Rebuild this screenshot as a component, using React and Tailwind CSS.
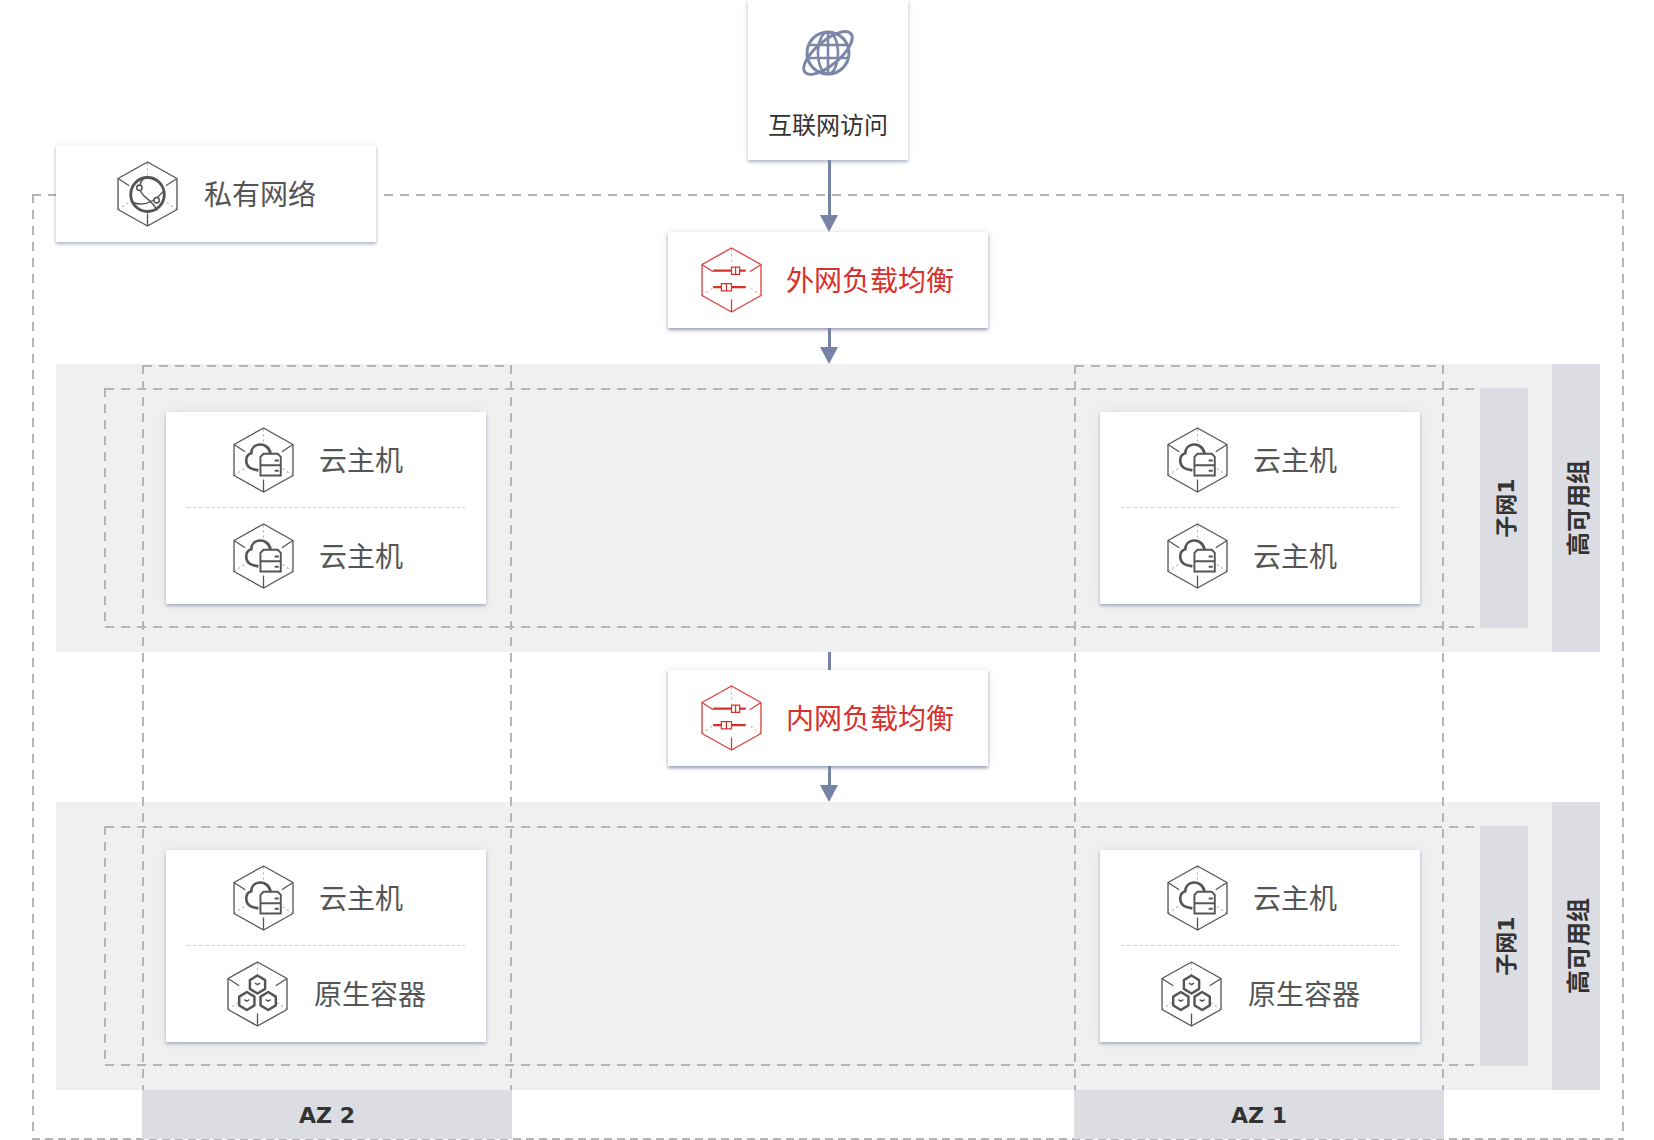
const ARROW = '#7783a6'

function HexIcon({ color = '#555', children }) {
  return (
    <svg width="61" height="66" viewBox="0 0 60 64" preserveAspectRatio="none" fill="none" className="shrink-0">
      <g stroke={color} strokeWidth="1.3" strokeLinejoin="round">
        <path d="M30 1 L59 17 V47 L30 63 L1 47 V17 Z" />
        <path d="M1 17 L12 24 M59 17 L48 24 M30 63 V51" />
      </g>
      <g stroke={color} strokeOpacity="0.5" strokeWidth="1" strokeDasharray="2 3">
        <path d="M30 2 V15 M1 47 L13 39 M59 47 L47 39" />
      </g>
      {children}
    </svg>
  )
}

function CloudIcon() {
  return (
    <HexIcon>
      <g stroke="#555" fill="none" strokeWidth="1.9">
        <path d="M37 26 C36 20 31 16.5 26 17 C21 17.5 18 21 18 25.5 C14.5 26.5 13 29.5 13 32.5 C13 37 16 40 20 41 L25 42" strokeWidth="2.6" />
        <path d="M27 47 V29 L30 26 H44 L47 29 V47 Z M27 37 H47" fill="#fff" />
        <path d="M41 32.5 H45 M41 42.5 H45" />
      </g>
    </HexIcon>
  )
}

function ContainerIcon() {
  return (
    <HexIcon>
      <g stroke="#555" fill="none" strokeWidth="2.4" strokeLinejoin="round">
        <path d="M30 14 L37.5 18.5 V27 L30 31.5 L22.5 27 V18.5 Z" />
        <path d="M19.5 30 L27 34.5 V43 L19.5 47.5 L12 43 V34.5 Z" />
        <path d="M40.5 30 L48 34.5 V43 L40.5 47.5 L33 43 V34.5 Z" />
        <path d="M27.5 21.5 L30 23 L32.5 21.5 M17 37.5 L19.5 39 L22 37.5 M38 37.5 L40.5 39 L43 37.5" strokeWidth="1.4" />
      </g>
    </HexIcon>
  )
}

function VpcIcon() {
  return (
    <HexIcon>
      <g stroke="#555" fill="none">
        <circle cx="30" cy="32.5" r="16.5" strokeWidth="2.8" fill="#fff" />
        <path d="M26 17 C20 24 22 30 28 35 C33 39 38 44 39 48" strokeWidth="1.4" />
        <path d="M15 40 C25 44 35 42 46 29" strokeWidth="1.4" />
        <circle cx="22" cy="26" r="2.6" strokeWidth="1.5" fill="#fff" />
        <circle cx="39" cy="38" r="2.6" strokeWidth="1.5" fill="#fff" />
      </g>
    </HexIcon>
  )
}

function BalancerIcon() {
  return (
    <HexIcon color="#d8403a">
      <g stroke="#d8302a" fill="none">
        <path d="M12 23 H30 M38 23 H44 M12 39 H20 M30 39 H44" strokeWidth="2.2" />
        <path d="M30 19.5 H38 V26.5 H30 Z M34 19.5 V26.5 M20 35.5 H30 V42.5 H20 Z M25 35.5 V42.5" strokeWidth="1.2" fill="#fff" />
      </g>
    </HexIcon>
  )
}

function GlobeIcon() {
  return (
    <svg width="52" height="52" viewBox="0 0 52 52" fill="none" stroke="#7b86a8" strokeWidth="3" className="shrink-0">
      <circle cx="26" cy="26" r="21" />
      <ellipse cx="26" cy="26" rx="10" ry="21" strokeWidth="2.6" />
      <path d="M26 5 V47 M6 18 H46 M5 31 H47" strokeWidth="2.6" />
      <ellipse cx="26" cy="26" rx="30" ry="12" transform="rotate(-40 26 26)" />
    </svg>
  )
}

function Arrow({ height }) {
  return (
    <div className="flex flex-col items-center shrink-0 translate-x-[1px]">
      <div className="w-[3px] bg-[#7783a6]" style={{ height }} />
      <svg width="18" height="17" viewBox="0 0 18 17" className="block">
        <path d="M0 0 H18 L9 17 Z" fill={ARROW} />
      </svg>
    </div>
  )
}

function LoadBalancer({ name }) {
  return (
    <div className="flex items-center shrink-0 w-[320px] h-[96px] pl-[33px] gap-[24px] bg-white shadow-[0_2px_3px_rgba(90,100,140,0.6),0_0_10px_rgba(0,0,0,0.08)]">
      <BalancerIcon />
      <span className="pb-[2px] text-[28px] leading-none text-[#d8302a]">{name}</span>
    </div>
  )
}

function HostCard({ bottom = 'host' }) {
  return (
    <div className="w-[320px] h-[192px] mt-[48px] shrink-0 bg-white shadow-[0_2px_3px_rgba(90,100,140,0.45),0_0_14px_rgba(0,0,0,0.05)]">
      <div className="flex items-center h-[95px] pl-[67px] gap-[25px]">
        <CloudIcon />
        <span className="pb-[2px] text-[28px] leading-none text-[#555]">云主机</span>
      </div>
      <div className="h-px mx-[21px] bg-[repeating-linear-gradient(90deg,#d4d4d4_0_4px,transparent_4px_6px)]" />
      {bottom === 'host' ? (
        <div className="flex items-center h-[96px] pl-[67px] gap-[25px]">
          <CloudIcon />
          <span className="pb-[2px] text-[28px] leading-none text-[#555]">云主机</span>
        </div>
      ) : (
        <div className="flex items-center h-[96px] pl-[61px] gap-[26px]">
          <ContainerIcon />
          <span className="pb-[2px] text-[28px] leading-none text-[#555]">原生容器</span>
        </div>
      )}
    </div>
  )
}

function Band({ bottom }) {
  return (
    <div className="flex items-start h-[288px] ml-[56px] w-[1544px] pl-[110px] bg-[#f0f0f1]">
      <HostCard bottom={bottom} />
      <div className="ml-[614px]">
        <HostCard bottom={bottom} />
      </div>
      <div className="flex items-center justify-center w-[48px] h-[240px] ml-[60px] mt-[24px] shrink-0 bg-[#dcdde3]">
        <span className="-rotate-90 translate-x-[3px] whitespace-nowrap text-[22px] font-bold leading-none text-[#333] font-[family-name:'DejaVu_Sans','Noto_Sans_CJK_SC',sans-serif]">子网1</span>
      </div>
      <div className="flex items-center justify-center w-[48px] h-[288px] ml-[24px] shrink-0 bg-[#dcdde3]">
        <span className="-rotate-90 translate-x-[1px] whitespace-nowrap text-[24px] font-bold leading-none text-[#333]">高可用组</span>
      </div>
    </div>
  )
}

const hDash = 'absolute h-[2px] bg-[repeating-linear-gradient(90deg,#b5b5b5_0_9px,transparent_9px_16px)]'
const vDash = 'absolute w-[2px] bg-[repeating-linear-gradient(180deg,#b5b5b5_0_9px,transparent_9px_16px)]'

export default function App() {
  return (
    <div className="relative w-[1654px] h-[1140px] overflow-hidden bg-white font-[family-name:'Noto_Sans_CJK_SC',sans-serif]">
      {/* outer frame */}
      <div className={`${hDash} left-[32px] top-[194px] w-[24px]`} />
      <div className={`${hDash} left-[384px] top-[194px] w-[1240px]`} />
      <div className={`${vDash} left-[32px] top-[194px] h-[945px]`} />
      <div className={`${vDash} left-[1622px] top-[194px] h-[945px]`} />
      <div className="absolute left-[32px] top-[1138px] w-[1592px] h-[2px] bg-[repeating-linear-gradient(90deg,#b5b5b5_0_8px,transparent_8px_13px)]" />

      <div className="relative">
        {/* head */}
        <div className="flex h-[364px] pl-[56px]">
          <div className="w-[320px] pt-[146px]">
            <div className="flex items-center h-[96px] pl-[61px] gap-[26px] bg-white shadow-[0_2px_3px_rgba(90,100,140,0.45),0_0_10px_rgba(0,0,0,0.06)]">
              <VpcIcon />
              <span className="pb-[2px] text-[28px] leading-none text-[#555]">私有网络</span>
            </div>
          </div>
          <div className="flex flex-col items-center w-[320px] ml-[292px]">
            <div className="flex flex-col items-center shrink-0 w-[160px] h-[160px] pt-[27px] bg-white shadow-[0_2px_3px_rgba(90,100,140,0.45),0_0_10px_rgba(0,0,0,0.06)]">
              <GlobeIcon />
              <span className="mt-[33px] text-[24px] leading-none text-[#333]">互联网访问</span>
            </div>
            <Arrow height={55} />
            <LoadBalancer name="外网负载均衡" />
            <Arrow height={19} />
          </div>
        </div>

        <Band bottom="host" />

        {/* internal balancer */}
        <div className="flex flex-col items-center h-[150px] ml-[2px]">
          <div className="w-[3px] h-[18px] shrink-0 bg-[#7783a6] translate-x-[1px]" />
          <LoadBalancer name="内网负载均衡" />
          <Arrow height={19} />
        </div>

        <Band bottom="container" />

        {/* az labels */}
        <div className="flex h-[49px] pl-[142px]">
          <div className="flex items-center justify-center w-[370px] bg-[#dcdde3]">
            <span className="pt-[2px] text-[22px] font-bold leading-none text-[#333] font-[family-name:'DejaVu_Sans',sans-serif]">AZ 2</span>
          </div>
          <div className="flex items-center justify-center w-[370px] ml-[562px] bg-[#dcdde3]">
            <span className="pt-[2px] text-[22px] font-bold leading-none text-[#333] font-[family-name:'DejaVu_Sans',sans-serif]">AZ 1</span>
          </div>
        </div>
      </div>

      {/* subnet frames */}
      <div className={`${hDash} left-[105px] top-[388px] w-[1375px]`} />
      <div className={`${hDash} left-[105px] top-[626px] w-[1375px]`} />
      <div className={`${vDash} left-[104px] top-[388px] h-[240px]`} />
      <div className={`${hDash} left-[105px] top-[826px] w-[1375px]`} />
      <div className={`${hDash} left-[105px] top-[1064px] w-[1375px]`} />
      <div className={`${vDash} left-[104px] top-[826px] h-[240px]`} />

      {/* az frames */}
      <div className={`${hDash} left-[143px] top-[365px] w-[368px]`} />
      <div className={`${vDash} left-[142px] top-[365px] h-[725px]`} />
      <div className={`${vDash} left-[510px] top-[365px] h-[725px]`} />
      <div className={`${hDash} left-[1075px] top-[365px] w-[368px]`} />
      <div className={`${vDash} left-[1074px] top-[365px] h-[725px]`} />
      <div className={`${vDash} left-[1442px] top-[365px] h-[725px]`} />
    </div>
  )
}
